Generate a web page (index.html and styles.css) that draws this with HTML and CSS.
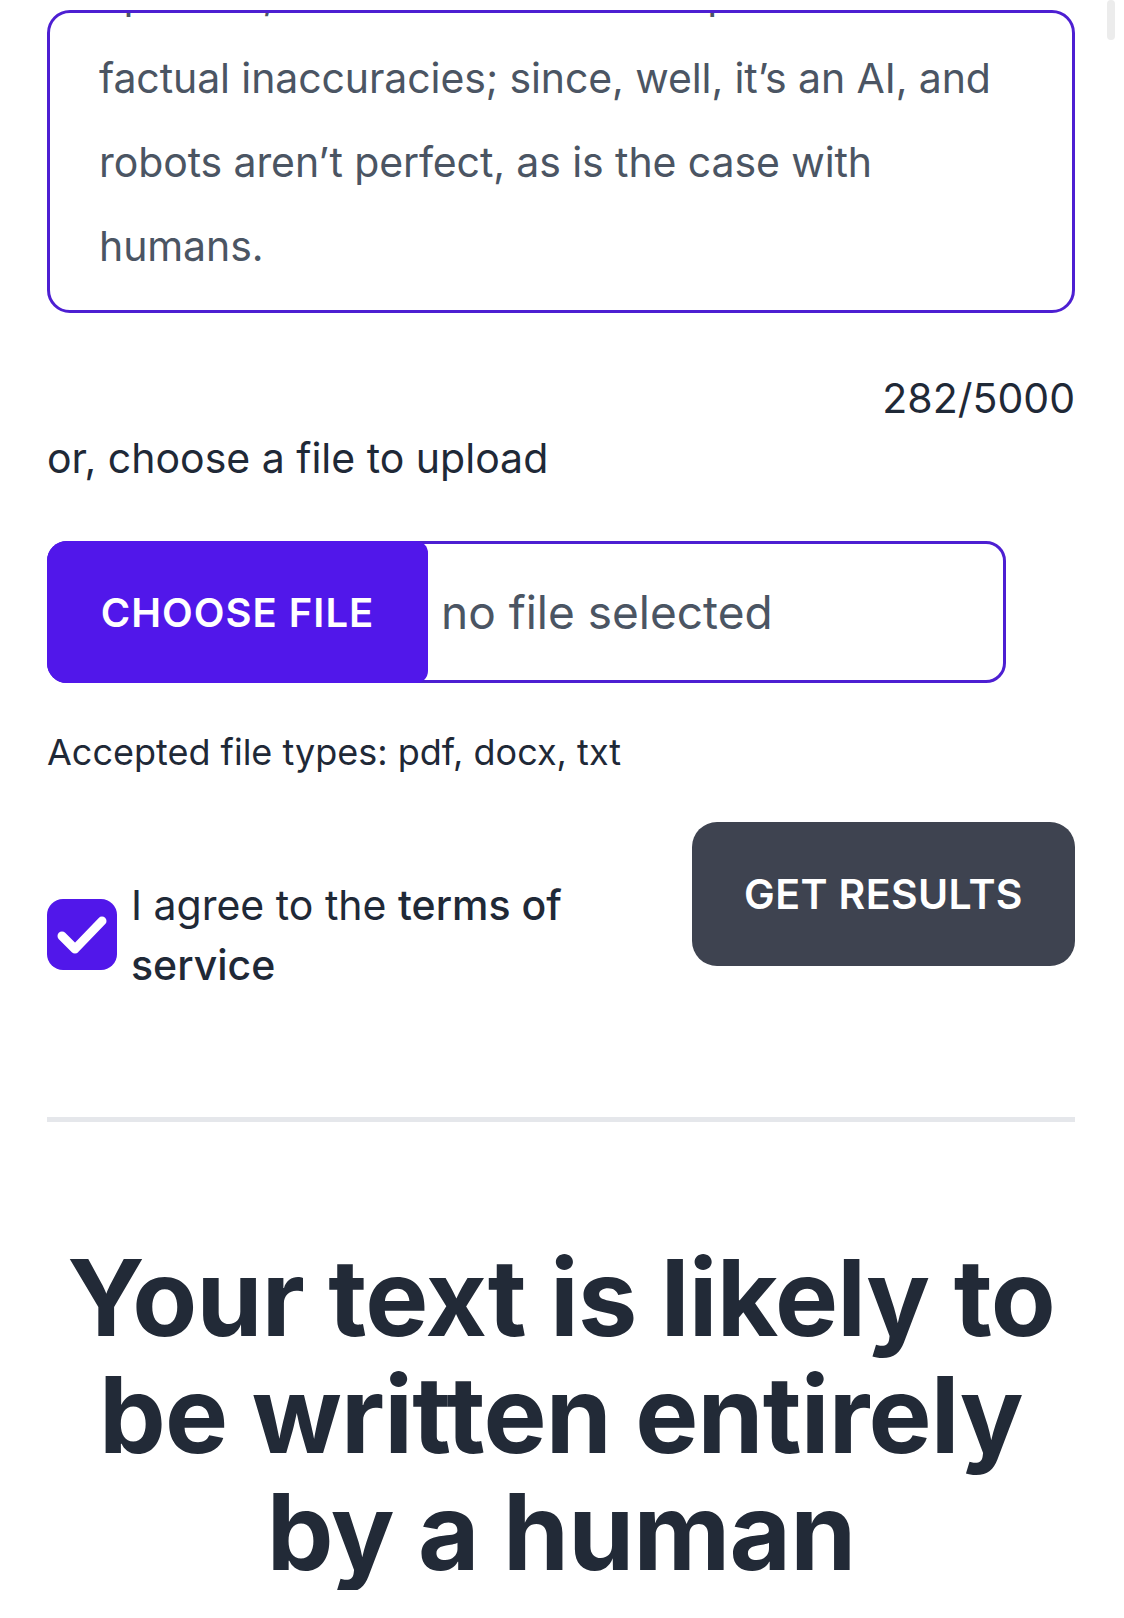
FILE: index.html
```html
<!DOCTYPE html>
<html lang="en">
<head>
    <meta charset="UTF-8">
    <title>AI Detector</title>
    <link rel="stylesheet" href="styles.css">
</head>
<body>
    <div class="scroll-thumb"></div>
    <main class="page">
        <div class="editor">
            <p class="editor-text">opinions, and it can sometimes produce<br>factual inaccuracies; since, well, it’s an AI, and<br>robots aren’t perfect, as is the case with<br>humans.</p>
        </div>
        <div class="counter">282/5000</div>

        <p class="upload-label">or, choose a file to upload</p>
        <div class="file-input">
            <span class="file-btn">CHOOSE FILE</span>
            <span class="file-name">no file selected</span>
        </div>
        <p class="file-types">Accepted file types: pdf, docx, txt</p>

        <div class="submit-row">
            <label class="agree">
                <span class="check">
                    <svg width="70" height="71" viewBox="0 0 70 71">
                        <polyline points="15,37 28,50 55,22" fill="none" stroke="#fff" stroke-width="9" stroke-linecap="round" stroke-linejoin="round"/>
                    </svg>
                </span>
                <span class="agree-text">I agree to the <b>terms of service</b></span>
            </label>
            <button class="results-btn">GET RESULTS</button>
        </div>

        <hr class="divider">

        <h1 class="verdict">Your text is likely to be written entirely by a human</h1>
    </main>
</body>
</html>
```

FILE: styles.css
```css
* {
    margin: 0;
    padding: 0;
    box-sizing: border-box;
}
body {
    background: #fff;
    font-family: Inter, "Noto Sans", sans-serif;
    color: #1f2937;
}
.page {
    width: 1028px;
    margin-left: 47px;
}
.scroll-thumb { /* ios scroll indicator */
    position: fixed;
    top: 0;
    right: 9px;
    width: 8px;
    height: 40px;
    background: #ececec;
    border-radius: 4px;
}

/* textarea */
.editor {
    margin-top: 10px;
    height: 303px;
    border: 3px solid #4d1fd2;
    border-radius: 23px;
    overflow: hidden;
    padding: 0 30px 0 49px;
}
.editor-text {
    margin-top: -61px;
    font-size: 41px;
    line-height: 84px;
    color: #4b5563;
    letter-spacing: -0.1px;
    white-space: nowrap;
}
.counter {
    margin-top: 60px;
    text-align: right;
    font-size: 41px;
    line-height: 50px;
}

/* file upload */
.upload-label {
    margin-top: 10px;
    font-size: 41px;
    line-height: 50px;
}
.file-input {
    display: flex;
    align-items: center;
    width: 959px;
    height: 142px;
    margin-top: 58px;
    border: 3px solid #4d1fd2;
    border-radius: 20px;
}
.file-btn {
    display: flex;
    align-items: center;
    justify-content: center;
    align-self: stretch;
    width: 381px;
    margin: -3px 0 -3px -3px;
    background: #5117ea;
    border-radius: 20px 12px 12px 20px;
    color: #fff;
    font-size: 40px;
    font-weight: 600;
    letter-spacing: 1px;
}
.file-name {
    margin-left: 13px;
    font-size: 46px;
    color: #4b5563;
}
.file-types {
    margin-top: 44px;
    font-size: 36px;
    line-height: 50px;
}

/* agree + submit */
.submit-row {
    display: flex;
    justify-content: space-between;
    align-items: flex-start;
    margin-top: 45px;
}
.agree {
    display: flex;
    align-items: flex-start;
    padding-top: 53px;
}
.check {
    width: 70px;
    height: 71px;
    margin-top: 24px;
    margin-right: 14px;
    background: #5117ea;
    border-radius: 16px;
    flex-shrink: 0;
}
.check svg {
    display: block;
}
.agree-text {
    width: 440px;
    font-size: 41px;
    line-height: 60px;
}
.agree-text b {
    font-weight: 500;
}
.results-btn {
    width: 383px;
    height: 144px;
    border: 0;
    border-radius: 25px;
    background: #3e4350;
    color: #fff;
    font-family: inherit;
    font-size: 41px;
    font-weight: 600;
    letter-spacing: 0.4px;
}

.divider {
    height: 5px;
    margin-top: 122px;
    border: 0;
    background: #e5e7eb;
}
.verdict {
    margin-top: 117px;
    padding: 0 20px;
    text-align: center;
    font-size: 106px;
    line-height: 117px;
    font-weight: 700;
    letter-spacing: -0.8px;
    color: #222a37;
}
```
